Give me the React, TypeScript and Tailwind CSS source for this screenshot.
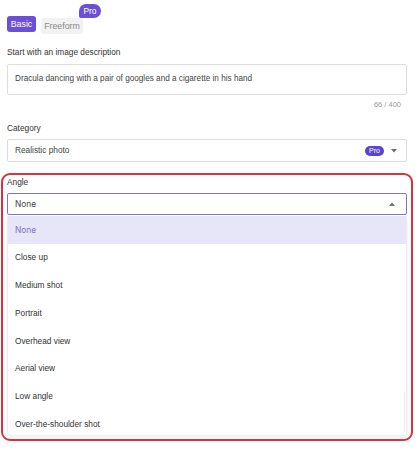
const angles = [
  'None',
  'Close up',
  'Medium shot',
  'Portrait',
  'Overhead view',
  'Aerial view',
  'Low angle',
  'Over-the-shoulder shot',
];

function Caret({ up }: { up?: boolean }) {
  return (
    <svg width="6" height="4" viewBox="0 0 6 4" className="text-[#6f6f6f]" fill="currentColor">
      {up ? <path d="M0 4 L3 0.5 L6 4 Z" /> : <path d="M0 0 L3 3.5 L6 0 Z" />}
    </svg>
  );
}

export default function App() {
  const prompt = 'Dracula dancing with a pair of googles and a cigarette in his hand';

  return (
    <div className="w-[419px] h-[450px] bg-white font-['Liberation_Sans',Arial,sans-serif] text-[#333]">
      <div className="w-[400px] ml-[7px] pt-[16px]">
        {/* tabs */}
        <div className="flex items-center gap-[5px] h-[16px]">
          <button className="h-[16px] w-[29px] rounded-[3px] bg-[#6c4fd7] text-white text-[8.8px] leading-[16px] text-center">
            Basic
          </button>
          <div className="relative">
            <button className="h-[16px] w-[42px] rounded-[3px] bg-[#f2f2f2] text-[#8a8a8a] text-[8.8px] leading-[16px] text-center">
              Freeform
            </button>
            <span className="absolute left-[38px] -top-[8px] h-[14px] w-[22px] text-center rounded-[8px] rounded-bl-[3px] bg-[#6c4fd7] text-white text-[8.4px] leading-[14px]">
              Pro
            </span>
          </div>
        </div>

        {/* description */}
        <div className="mt-[15px] text-[8.3px] leading-[10px] text-[#333]">Start with an image description</div>
        <div className="mt-[7px] h-[31px] border border-[#dcdcdc] rounded-[2px] px-[7px] flex items-center text-[8.2px] text-[#444]">
          {prompt}
        </div>
        <div className="mt-[5px] pr-[6px] text-right text-[7.5px] leading-[10px] text-[#9a9a9a]">
          {prompt.length} / 400
        </div>

        {/* category */}
        <div className="mt-[13px] text-[8.3px] leading-[10px] text-[#333]">Category</div>
        <div className="mt-[6px] h-[23px] border border-[#dcdcdc] rounded-[2px] pl-[7px] pr-[9px] flex items-center text-[8.3px] text-[#444]">
          <span className="flex-1">Realistic photo</span>
          <span className="h-[10px] w-[19px] rounded-full bg-[#5b44d4] text-white text-[7px] leading-[10px] text-center mr-[7px]">
            Pro
          </span>
          <Caret />
        </div>

        {/* angle (highlighted) */}
        <div className="mt-[11px] -mx-[6px] border-2 border-[#d4343f] rounded-[9px] px-[4px] pt-[2px] pb-[4px]">
          <div className="text-[8.3px] leading-[10px] text-[#333]">Angle</div>
          <div className="mt-[6px] h-[22px] border border-[#7d76b8] rounded-[2px] pl-[7px] pr-[11px] flex items-center text-[8.3px] text-[#444] font-['Inter',sans-serif]">
            <span className="flex-1">None</span>
            <Caret up />
          </div>
          <div className="mt-[1px] h-[219px] overflow-hidden relative border-x border-[#ececec] shadow-[0_2px_4px_rgba(0,0,0,0.08)]">
            {angles.map((a, i) => (
              <div
                key={a}
                className={
                  i === 0
                    ? "h-[27.75px] flex items-center pl-[7px] text-[8.3px] bg-[#e7e5f8] text-[#7a70c6] font-['Inter',sans-serif]"
                    : 'h-[27.75px] flex items-center pl-[7px] text-[8.3px] text-[#333]'
                }
              >
                {a}
              </div>
            ))}
            <div className="absolute right-[1px] top-[175px] w-[1px] h-[40px] bg-[#ebebeb]" />
          </div>
        </div>
      </div>
    </div>
  );
}
